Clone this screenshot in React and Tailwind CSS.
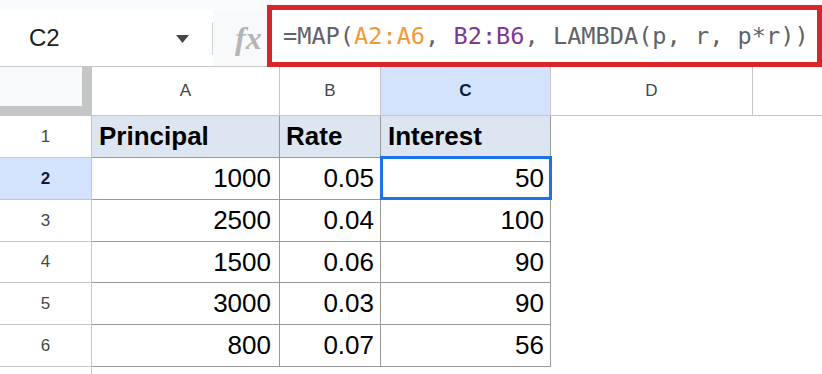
import React from 'react';

const rows = [
  { n: 2, a: '1000', b: '0.05', c: '50', h: 'h-[42px]', active: true },
  { n: 3, a: '2500', b: '0.04', c: '100', h: 'h-[42px]' },
  { n: 4, a: '1500', b: '0.06', c: '90', h: 'h-[41px]' },
  { n: 5, a: '3000', b: '0.03', c: '90', h: 'h-[42px]' },
  { n: 6, a: '800', b: '0.07', c: '56', h: 'h-[42px]' },
];

const FormulaBar = () => (
  <div className="flex h-[67px] bg-[#f9fbfd]">
    <div className="flex w-[267px] shrink-0 flex-col pt-[10px]">
      <div className="flex flex-1 border-b border-[#c7c7c7]">
        {/* Name box */}
        <div className="flex w-[212px] items-center bg-white">
          <span className="ml-[29px] text-[24px] text-[#1f1f1f]">C2</span>
          <svg className="ml-[116px] mt-[1px]" width="13" height="8" viewBox="0 0 13 8">
            <polygon points="0,0 13,0 6.5,8" fill="#444746" />
          </svg>
        </div>
        <div className="flex items-center bg-white">
          <div className="h-[33px] w-px bg-[#c9d3df]" />
        </div>
        {/* fx */}
        <div className="flex flex-1 items-center bg-[#f8f9fa] pl-[22px]">
          <span className="font-['Liberation_Serif',serif] text-[32px] font-bold italic leading-none text-[#b5b5b5]">
            fx
          </span>
        </div>
      </div>
    </div>
    <div className="mt-[5px] flex h-[62px] flex-1 items-center border-[5px] border-[#d9262b] bg-white pl-[11px] pt-[2px]">
      <span className="whitespace-pre font-['DejaVu_Sans_Mono',monospace] text-[23.6px] text-[#5f6368]">
        =MAP(<span className="text-[#f09a36]">A2:A6</span>, <span className="text-[#7e3794]">B2:B6</span>, LAMBDA(p, r, p*r))
      </span>
    </div>
  </div>
);

const HeaderRow = () => (
  <div className="flex h-[49px]">
    <div className="flex w-[92px] shrink-0 flex-col">
      <div className="flex h-[39px]">
        <div className="w-[82px] bg-[#f8f9fa]" />
        <div className="flex-1 bg-[#c4c7c5]" />
      </div>
      <div className="h-[10px] bg-[#c4c7c5]" />
    </div>
    <div className="flex w-[188px] shrink-0 items-center justify-center border-r border-b border-[#c7c7c7] text-[17px] text-[#444746]">A</div>
    <div className="flex w-[101px] shrink-0 items-center justify-center border-r border-b border-[#c7c7c7] text-[17px] text-[#444746]">B</div>
    <div className="flex w-[170px] shrink-0 items-center justify-center border-r border-b border-[#c7c7c7] bg-[#d3e3fd] text-[17px] font-bold text-[#0b1d3a]">C</div>
    <div className="flex w-[202px] shrink-0 items-center justify-center border-r border-b border-[#c7c7c7] text-[17px] text-[#444746]">D</div>
    <div className="flex-1 border-b border-[#c7c7c7]" />
  </div>
);

export default function App() {
  return (
    <div className="h-[374px] w-[822px] overflow-hidden bg-white font-['Liberation_Sans',Arial,sans-serif]">
      <FormulaBar />
      <HeaderRow />

      {/* Row 1: table headings */}
      <div className="flex h-[42px]">
        <div className="flex w-[92px] shrink-0 items-center justify-center border-r border-b border-[#c7c7c7] text-[17px] text-[#444746]">1</div>
        <div className="flex w-[188px] shrink-0 items-center border-r border-b border-[#999] bg-[#dde6f0] pl-[7px] text-[26px] font-bold text-black">Principal</div>
        <div className="flex w-[101px] shrink-0 items-center border-r border-b border-[#999] bg-[#dde6f0] pl-[6px] text-[26px] font-bold text-black">Rate</div>
        <div className="flex w-[170px] shrink-0 items-center border-r border-b border-[#999] bg-[#dde6f0] pl-[7px] text-[26px] font-bold text-black">Interest</div>
        <div className="flex-1" />
      </div>

      {rows.map((r) => (
        <div key={r.n} className={`flex ${r.h}`}>
          <div
            className={
              r.active
                ? 'flex w-[92px] shrink-0 items-center justify-center border-r border-b border-[#c7c7c7] bg-[#d3e3fd] text-[17px] font-bold text-[#0b1d3a]'
                : 'flex w-[92px] shrink-0 items-center justify-center border-r border-b border-[#c7c7c7] text-[17px] text-[#444746]'
            }
          >
            {r.n}
          </div>
          <div className="flex w-[188px] shrink-0 items-center justify-end border-r border-b border-[#999] pr-[8px] text-[26px] text-black">{r.a}</div>
          <div className="flex w-[101px] shrink-0 items-center justify-end border-r border-b border-[#999] pr-[6px] text-[26px] text-black">{r.b}</div>
          <div className="relative flex w-[170px] shrink-0 items-center justify-end border-r border-b border-[#999] pr-[6px] text-[26px] text-black">
            {r.active && (
              <div className="absolute top-[-2px] left-[-1px] right-[-2px] bottom-[-1px] border-[3px] border-[#1a73e8]" />
            )}
            <span className="relative">{r.c}</span>
          </div>
          <div className="flex-1" />
        </div>
      ))}

      {/* Row 7 peeking in */}
      <div className="flex h-[20px]">
        <div className="w-[92px] shrink-0 border-r border-[#c7c7c7]" />
      </div>
    </div>
  );
}
